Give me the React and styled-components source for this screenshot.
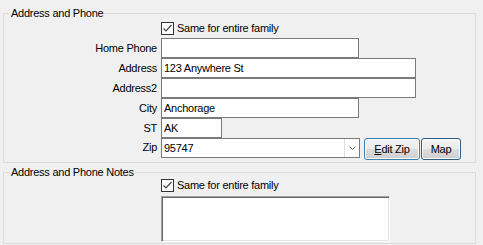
import styled, { createGlobalStyle } from "styled-components";

const GlobalStyle = createGlobalStyle`
  html, body {
    margin: 0;
    background: #f0f0f0;
  }
  body {
    font-family: "Liberation Sans", Arial, sans-serif;
    font-size: 11px;
    letter-spacing: -0.25px;
    color: #000;
  }
`;

const Page = styled.div`
  width: 483px;
  height: 245px;
  box-sizing: border-box;
  padding: 7px 0 0 3px;
  background: #f0f0f0;
  display: flex;
  flex-direction: column;
  gap: 3px;
  overflow: hidden;
`;

const Group = styled.fieldset`
  margin: 0;
  padding: 0 0 ${(p) => p.$bottom || 0}px 0;
  width: 473px;
  box-sizing: border-box;
  border: 1px solid #dcdcdc;
  min-inline-size: auto;
`;

const Legend = styled.legend`
  margin-left: 6px;
  padding: 0 1px;
  font-size: 11px;
  line-height: 13px;
`;

const Form = styled.div`
  display: grid;
  grid-template-columns: 153px auto;
  grid-template-rows: ${(p) => p.$rows};
  column-gap: 4px;
  align-items: center;
`;

const Label = styled.label`
  text-align: right;
  line-height: 13px;
  white-space: nowrap;
`;

const CheckRow = styled.div`
  grid-column: 2;
  align-self: stretch;
  display: flex;
  align-items: flex-start;
  gap: 3px;
  padding-top: ${(p) => p.$top}px;
  box-sizing: border-box;
  line-height: 13px;
`;

const Box = styled.span`
  width: 13px;
  height: 13px;
  box-sizing: border-box;
  border: 1px solid #333;
  background: #fff;
  display: flex;
  align-items: center;
  justify-content: center;
`;

const Input = styled.div`
  width: ${(p) => p.$w}px;
  height: 20px;
  box-sizing: border-box;
  border: 1px solid #7a7a7a;
  background: #fff;
  padding: 0 2px;
  line-height: 18px;
  white-space: nowrap;
`;

const ZipRow = styled.div`
  display: flex;
  align-items: flex-start;
  height: 22px;
`;

const Combo = styled.div`
  width: 199px;
  height: 20px;
  box-sizing: border-box;
  border: 1px solid #7a7a7a;
  background: #fff;
  display: flex;
`;

const ComboText = styled.span`
  flex: 1;
  padding: 0 2px;
  line-height: 18px;
`;

const Arrow = styled.span`
  width: 14px;
  border-left: 1px solid #dcdcdc;
  display: flex;
  align-items: center;
  justify-content: center;
`;

const Button = styled.button`
  width: ${(p) => p.$w}px;
  height: 22px;
  margin-left: ${(p) => p.$ml}px;
  padding: 0;
  box-sizing: border-box;
  border: 1px solid ${(p) => (p.$default ? "#3c7fb1" : "#2f5b80")};
  border-radius: 3px;
  background: linear-gradient(#f3f3f3, #ebebeb 50%, #dddddd 50%, #cfcfcf);
  box-shadow: inset 0 0 0 1px #fcfcfc;
  font-family: "Liberation Sans", Arial, sans-serif;
  font-size: 11px;
  letter-spacing: -0.25px;
  color: #000;
  line-height: 20px;
`;

const Notes = styled.div`
  grid-column: 2;
  align-self: start;
  width: 229px;
  height: 46px;
  box-sizing: border-box;
  border: 1px solid;
  border-color: #a0a0a0 #fff #fff #a0a0a0;
  box-shadow: inset 1px 1px 0 #696969, inset -1px -1px 0 #e3e3e3;
  background: #fff;
`;

function Check() {
  return (
    <Box>
      <svg width="11" height="11" viewBox="0 0 11 11">
        <path d="M1.5 5.5 L4 8 L9.5 2" fill="none" stroke="#444" strokeWidth="1.2" />
      </svg>
    </Box>
  );
}

export default function App() {
  return (
    <>
      <GlobalStyle />
      <Page>
        <Group $bottom={2}>
          <Legend>Address and Phone</Legend>
          <Form $rows="18px repeat(5, 20px) 22px">
            <CheckRow $top={2}>
              <Check />
              <span>Same for entire family</span>
            </CheckRow>
            <Label>Home Phone</Label>
            <Input $w={198} />
            <Label>Address</Label>
            <Input $w={255}>123 Anywhere St</Input>
            <Label>Address2</Label>
            <Input $w={255} />
            <Label>City</Label>
            <Input $w={198}>Anchorage</Input>
            <Label>ST</Label>
            <Input $w={61}>AK</Input>
            <Label style={{ alignSelf: "start", paddingTop: 3 }}>Zip</Label>
            <ZipRow>
              <Combo>
                <ComboText>95747</ComboText>
                <Arrow>
                  <svg width="7" height="4" viewBox="0 0 7 4">
                    <path d="M0.5 0.5 L3.5 3.5 L6.5 0.5" fill="none" stroke="#606060" />
                  </svg>
                </Arrow>
              </Combo>
              <Button $w={56} $ml={4} $default>
                <u>E</u>dit Zip
              </Button>
              <Button $w={40} $ml={1}>Map</Button>
            </ZipRow>
          </Form>
        </Group>
        <Group $bottom={1}>
          <Legend>Address and Phone Notes</Legend>
          <Form $rows="17px 46px">
            <CheckRow $top={0}>
              <Check />
              <span>Same for entire family</span>
            </CheckRow>
            <Notes />
          </Form>
        </Group>
      </Page>
    </>
  );
}
